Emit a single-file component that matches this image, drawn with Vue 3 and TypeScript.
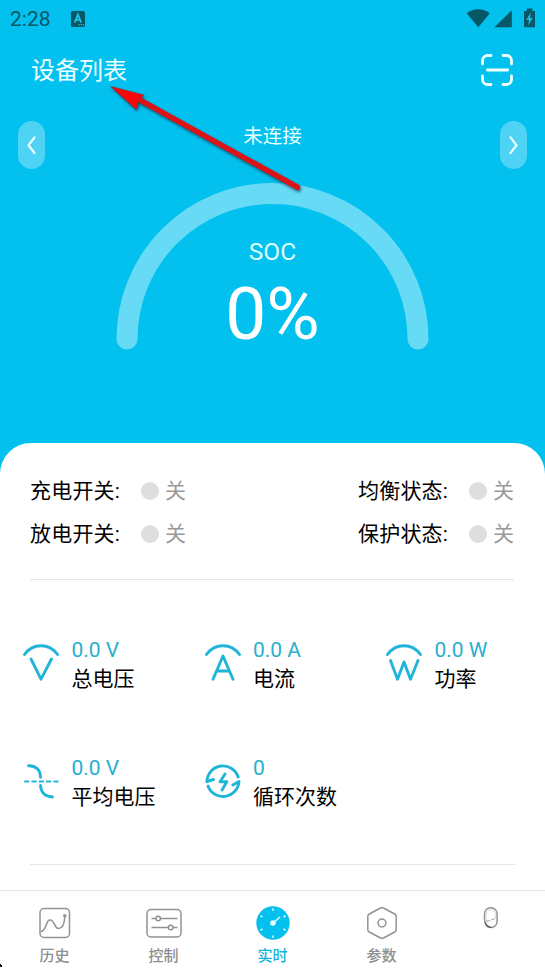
<template>
  <main class="screen">
    <header class="status-bar">
      <span class="clock">2:28</span>
      <svg class="app-badge" width="14" height="16" viewBox="0 0 14 16">
        <rect width="14" height="16" rx="1.5" fill="#075766" />
        <path d="M3.7 11.5 6.9 3.5 10.1 11.5M4.8 8.9h4.2" fill="none" stroke="#20c0e4" stroke-width="1.9" />
        <path d="M7.5 13.7h1.2M9.7 13.7h1.2M11.8 13.7H13" stroke="#20c0e4" stroke-width="1.2" />
      </svg>
      <svg class="system-icons" width="70" height="22" viewBox="0 0 70 22" fill="#075766">
        <path d="M.7 5.3C7.5-.2 17 -.2 23.8 5.3L12.3 19.2Z" />
        <path d="M45.8 2.2v17H28.5Z" />
        <path d="M60.8.5h5.6V3H69v16.2H58V3h2.8Z" />
        <path d="M64.8 4.5 60.2 12h2.8l-.8 5.5 4.6-7.4h-2.8Z" fill="#20b9dc" />
      </svg>
    </header>

    <div class="title-bar">
      <h1>设备列表</h1>
      <svg width="32" height="32" viewBox="0 0 32 32" class="scan">
        <path d="M1.5 10V6.5a5 5 0 0 1 5-5H10M22 1.5h3.5a5 5 0 0 1 5 5V10M30.5 22v3.5a5 5 0 0 1-5 5H22M10 30.5H6.5a5 5 0 0 1-5-5V22M6.3 16h20.4" />
      </svg>
    </div>

    <section class="hero">
      <div class="switcher">
        <button type="button" aria-label="previous">
          <svg width="10" height="18" viewBox="0 0 10 18"><path d="M7.5 1.3 1.5 9.2 7.5 17" /></svg>
        </button>
        <span>{{ connection }}</span>
        <button type="button" aria-label="next">
          <svg width="10" height="18" viewBox="0 0 10 18"><path d="M2.5 1.3 8.5 9.2 2.5 17" /></svg>
        </button>
      </div>
      <div class="gauge">
        <svg width="313" height="168" viewBox="0 0 313 168">
          <path d="M11 156A145.5 145.5 0 0 1 302 156" />
        </svg>
        <div class="reading">
          <span class="reading-name">SOC</span>
          <span class="reading-value">{{ soc }}%</span>
        </div>
      </div>
    </section>

    <section class="sheet">
      <div class="states">
        <div v-for="state in states" :key="state.label" class="state">
          <span class="state-label">{{ state.label }}:</span>
          <i></i>
          <span class="state-value">{{ state.on ? '开' : '关' }}</span>
        </div>
      </div>

      <div class="metrics">
        <div v-for="metric in metrics" :key="metric.label" class="metric">
          <svg width="36" height="40" viewBox="0 0 36 40">
            <path v-for="d in metric.paths" :key="d" :d="d" />
            <path v-if="metric.dash" :d="metric.dash" class="dash" />
          </svg>
          <div>
            <p class="metric-value">{{ metric.value }}</p>
            <p class="metric-label">{{ metric.label }}</p>
          </div>
        </div>
      </div>
      <div class="rule"></div>
    </section>

    <nav class="tabs">
      <a v-for="tab in tabs" :key="tab.icon" :class="{ active: tab.icon === current }">
        <svg width="36" height="36" viewBox="0 0 36 36">
          <template v-if="tab.icon === 'history'">
            <rect x="3" y="3.5" width="29.5" height="29" rx="4" />
            <path d="M4 26.5c6-1 4.5-11.5 9-11.5 5 0 4 8.5 8.5 8.5 4.5 0 6-5 6.3-12" />
            <circle cx="27.8" cy="10.8" r="1" />
          </template>
          <template v-else-if="tab.icon === 'control'">
            <rect x="1" y="4.5" width="34" height="27.5" rx="4" />
            <path d="M5.5 13.5h4.3M14.5 13.5H31.5M5.5 22.5h16.8M27 22.5h4.5" />
            <circle cx="12.2" cy="13.5" r="2.3" />
            <circle cx="24.7" cy="22.5" r="2.3" />
          </template>
          <template v-else-if="tab.icon === 'live'">
            <circle cx="18" cy="18" r="16.7" class="dial" />
            <path d="M18 3.5v2.3M18 30.5v2.3M5.5 10.8l2 1.2M28.5 12l2-1.2M5.5 25.2l2-1.2M28.5 24l2 1.2" class="dial-mark" />
            <path d="m18 18 7-6" class="dial-mark" />
            <circle cx="18" cy="18" r="2.8" class="dial-hub" />
          </template>
          <template v-else-if="tab.icon === 'params'">
            <path d="M16.5 3 5.3 9q-1.5.8-1.5 2.3v13.4q0 1.5 1.5 2.3l11.2 6q1.5.8 3 0l11.2-6q1.5-.8 1.5-2.3V11.3q0-1.5-1.5-2.3L19.5 3q-1.5-.8-3 0Z" />
            <circle cx="18" cy="18" r="3.9" />
          </template>
          <template v-else>
            <path d="M11.5 14.5V9a6.3 6.3 0 0 1 12.6 0v8a6 6 0 0 1-6.3 5.5c-4.5 0-6-3-6.3-8Z" />
            <path d="M13.2 9.5a4.6 4.6 0 0 1 9.2 0v4l-9 3Z" class="faint" />
            <path d="M12.2 17.5q2 5 6.3 4.8" class="ink" />
            <path d="M12.5 16.5l4-.8m2-.9 3-1" class="scratch" />
          </template>
        </svg>
        <span>{{ tab.label }}</span>
      </a>
    </nav>

    <!-- pointer to the device list -->
    <svg class="pointer" width="210" height="120" viewBox="100 80 210 120">
      <path d="m138 98.8 159.5 88.4" class="shaft" />
      <path d="m110.8 86.5 32.9 8.5-4.5 4.5-3 9.8Z" class="tip" />
    </svg>
    <svg class="corner" width="3" height="4" viewBox="0 0 3 4">
      <path d="M0 0h1v1h1v2H0Z" />
    </svg>
  </main>
</template>

<script setup lang="ts">
import { ref } from 'vue'

type State = { label: string; on: boolean }

type Metric = {
  label: string
  value: string
  paths: string[]
  dash?: string
}

const connection = ref('未连接')
const soc = ref(0)
const current = ref('live')

const states: State[] = [
  { label: '充电开关', on: false },
  { label: '均衡状态', on: false },
  { label: '放电开关', on: false },
  { label: '保护状态', on: false },
]

const arc = 'M1.5 11.5C10-.2 26-.2 34.5 11.5'

const metrics: Metric[] = [
  { label: '总电压', value: '0.0 V', paths: [arc, 'M8 16 18 36.2 28.5 16'] },
  { label: '电流', value: '0.0 A', paths: [arc, 'M8 36.2 18 13 28 36.2M12 28h12'] },
  { label: '功率', value: '0.0 W', paths: [arc, 'M4.5 17.5 11.5 36.2 18 19 24.5 36.2 32 17.5'] },
  {
    label: '平均电压',
    value: '0.0 V',
    paths: ['M5.5 4.7C13 4.5 17.5 9 17.5 16.2', 'M17.5 24.5C18 31.5 22 35.5 29.5 36'],
    dash: 'M2 20.5h33',
  },
  {
    label: '循环次数',
    value: '0',
    paths: [
      'M2 20A16 16 0 0 1 33.2 16',
      'M2 20.5 8.5 18.5',
      'M3 25A16 16 0 0 0 34 20.5L27.8 24',
      'M20 13 15 20.8H21.8L17 29',
    ],
  },
]

const tabs = [
  { icon: 'history', label: '历史' },
  { icon: 'control', label: '控制' },
  { icon: 'live', label: '实时' },
  { icon: 'params', label: '参数' },
  { icon: 'more', label: '' },
]
</script>

<style>
body {
  margin: 0;
  background: #fff;
}
</style>

<style scoped>
.screen {
  position: relative;
  display: flex;
  flex-direction: column;
  width: 545px;
  height: 968px;
  overflow: hidden;
  background: linear-gradient(#02c1ef 500px, #fff 500px);
  font-family: Roboto, 'Noto Sans CJK SC', sans-serif;
  color: #fff;
}

svg {
  display: block;
  flex: none;
}

.status-bar {
  display: flex;
  align-items: center;
  height: 38px;
  padding: 0 9px 0 10px;
  box-sizing: border-box;
}

.clock {
  width: 61px;
  color: #075766;
  font-size: 21px;
  line-height: 38px;
}

.system-icons {
  margin-left: auto;
  margin-top: -1px;
}

.title-bar {
  display: flex;
  align-items: center;
  justify-content: space-between;
  height: 64px;
  padding: 0 32px 0 31px;
}

h1 {
  margin: 2px 0 0;
  color: #edffff;
  font-size: 24px;
  font-weight: 400;
  line-height: 36px;
}

.scan {
  fill: none;
  stroke: #edffff;
  stroke-width: 2.8;
  stroke-linecap: round;
}

.hero {
  flex: none;
  height: 341px;
  padding-top: 19px;
  box-sizing: border-box;
}

.switcher {
  display: flex;
  justify-content: space-between;
  height: 48px;
  padding: 0 18px;
}

.switcher span {
  color: #e8ffff;
  font-size: 19.5px;
  line-height: 31px;
}

.switcher button {
  display: grid;
  place-items: center;
  width: 27px;
  height: 48px;
  padding: 0;
  border: 0;
  border-radius: 14px;
  background: rgba(255, 255, 255, 0.3);
}

.switcher path {
  fill: none;
  stroke: #edffff;
  stroke-width: 2.2;
  stroke-linecap: round;
}

.gauge {
  display: grid;
  justify-content: center;
  margin-top: 14px;
}

.gauge > * {
  grid-area: 1 / 1;
}

.gauge path {
  fill: none;
  stroke: rgba(255, 255, 255, 0.4);
  stroke-width: 21;
  stroke-linecap: round;
}

.reading {
  display: flex;
  flex-direction: column;
  align-items: center;
  padding-top: 57px;
}

.reading-name {
  color: #dcffff;
  font-size: 24.5px;
  line-height: 24px;
}

.reading-value {
  margin-top: 12px;
  font-size: 73px;
  line-height: 76px;
}

.sheet {
  flex: none;
  height: 447px;
  padding: 34px 0 0;
  box-sizing: border-box;
  border-radius: 31px 31px 0 0;
  background: #fff;
  color: #000;
}

.states {
  display: grid;
  grid-template-columns: auto auto;
  justify-content: space-between;
  row-gap: 15px;
  margin: 0 31px 0 30px;
  padding-bottom: 31px;
  border-bottom: 1px solid #e6e6e6;
}

.state {
  display: flex;
  align-items: center;
  height: 28px;
  font-size: 21px;
  line-height: 28px;
}

.state-label {
  width: 111px;
  letter-spacing: 0.2px;
}

.state i {
  width: 18px;
  height: 18px;
  margin-right: 6px;
  margin-top: -1px;
  border-radius: 50%;
  background: #dedede;
}

.state-value {
  color: #999;
}

.metrics {
  display: grid;
  grid-template-columns: repeat(3, 181.5px);
  grid-auto-rows: 118px;
  padding: 56px 0 0 23px;
}

.metric {
  display: flex;
  align-items: flex-start;
  gap: 12.5px;
}

.metric svg {
  margin-top: 7px;
  fill: none;
  stroke: #1fb5d8;
  stroke-width: 2.9;
  stroke-linecap: round;
  stroke-linejoin: round;
}

.metric .dash {
  stroke-width: 2;
  stroke-dasharray: 3.5 3.8;
}

.metric p {
  margin: 0;
  font-size: 21px;
  line-height: 28px;
}

.metric .metric-value {
  color: #28afd0;
}

.metric .metric-label {
  margin-top: 1px;
}

.rule {
  height: 1px;
  margin: -8px 30px 0;
  background: #e6e6e6;
}

.tabs {
  display: grid;
  grid-template-columns: repeat(5, 1fr);
  flex: 1;
  border-top: 1px solid #e6e6e6;
  background: #fff;
}

.tabs a {
  display: flex;
  flex-direction: column;
  align-items: center;
  padding-top: 14px;
  color: #8e8e8e;
  font-size: 15px;
  font-weight: 500;
  line-height: 20px;
}

.tabs span {
  margin-top: 5px;
}

.tabs svg {
  fill: none;
  stroke: #929292;
  stroke-width: 1.5;
}

.tabs .active {
  color: #12b4dc;
}

.tabs .dial {
  fill: #04c0ef;
  stroke: none;
}

.tabs .dial-mark {
  stroke: #dcffff;
  stroke-width: 1.6;
}

.tabs .dial-hub {
  fill: #e8ffff;
  stroke: none;
}

.tabs .faint {
  stroke: #ddd;
  stroke-width: 1;
}

.tabs .ink {
  stroke: #555;
  stroke-width: 1.2;
}

.tabs .scratch {
  stroke: #999;
  stroke-width: 0.8;
}

.pointer {
  position: absolute;
  left: 100px;
  top: 80px;
  pointer-events: none;
  filter: drop-shadow(1.5px 2px 1.5px rgba(20, 40, 60, 0.7));
}

.pointer .shaft {
  stroke: #dc1418;
  stroke-width: 5.4;
  stroke-linecap: round;
}

.pointer .tip {
  fill: #f60808;
  stroke: #b01820;
  stroke-width: 0.6;
}

.corner {
  position: absolute;
  left: 0;
  bottom: 0;
}
</style>
